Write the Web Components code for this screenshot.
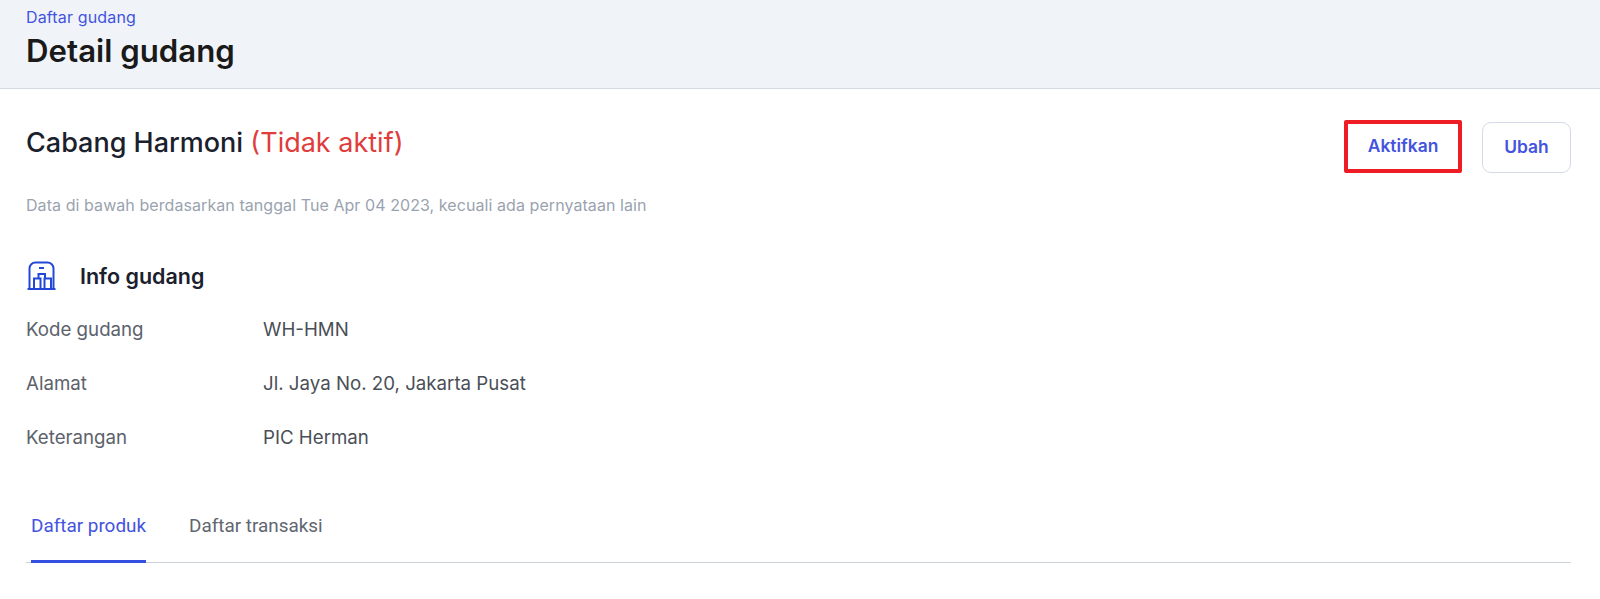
<!DOCTYPE html>
<html lang="id">
<head>
<meta charset="utf-8">
<title>Detail gudang</title>
<style>
	html, body { margin: 0; background: #fff; }
	body { font-family: Inter, "Liberation Sans", sans-serif; overflow: hidden; }
</style>
</head>
<body>
<page-header crumb="Daftar gudang" title="Detail gudang"></page-header>
<main-content>
	<warehouse-title slot="title" name="Cabang Harmoni" status="(Tidak aktif)">
		<action-button marked>Aktifkan</action-button>
		<action-button>Ubah</action-button>
	</warehouse-title>
	<info-section heading="Info gudang">
		<info-row label="Kode gudang">WH-HMN</info-row>
		<info-row label="Alamat">Jl. Jaya No. 20, Jakarta Pusat</info-row>
		<info-row label="Keterangan">PIC Herman</info-row>
	</info-section>
	<tab-bar>
		<tab-item active>Daftar produk</tab-item>
		<tab-item>Daftar transaksi</tab-item>
	</tab-bar>
</main-content>
<script>
class PageHeader extends HTMLElement {
	connectedCallback() {
		const root = this.attachShadow({ mode: 'open' });
		root.innerHTML = `
		<style>
			:host { display: block; height: 89px; box-sizing: border-box; padding: 8px 26px 0; background: #f0f4f9; border-bottom: 1px solid #d5dae2; }
			a { display: block; font-size: 16px; letter-spacing: 0.15px; line-height: 18px; color: #4353e0; text-decoration: none; }
			h1 { margin: 6px 0 0; font-size: 31.2px; line-height: 38px; font-weight: 600; color: #1a1a1a; }
		</style>
		<a href="#">${this.getAttribute('crumb')}</a>
		<h1>${this.getAttribute('title')}</h1>`;
	}
}

class MainContent extends HTMLElement {
	constructor() {
		super();
		this.attachShadow({ mode: 'open' }).innerHTML = `
		<style>
			:host { display: block; padding: 29px 29px 0 26px; }
		</style>
		<slot name="title"></slot>
		<slot></slot>`;
	}
}

class WarehouseTitle extends HTMLElement {
	connectedCallback() {
		const root = this.attachShadow({ mode: 'open' });
		root.innerHTML = `
		<style>
			:host { display: block; }
			.top { display: flex; justify-content: space-between; align-items: flex-start; height: 77px; padding-top: 4px; box-sizing: border-box; }
			h2 { margin: 3px 0 0; font-size: 27px; line-height: 36px; font-weight: 550; color: #1a202c; }
			h2 span { font-weight: 400; color: #e03c3c; }
			.actions { display: flex; gap: 20px; }
			p { margin: 0; font-size: 16px; letter-spacing: 0.07px; line-height: 20px; color: #9aa3af; }
		</style>
		<div class="top">
			<h2>${this.getAttribute('name')} <span>${this.getAttribute('status')}</span></h2>
			<div class="actions"><slot></slot></div>
		</div>
		<p>Data di bawah berdasarkan tanggal Tue Apr 04 2023, kecuali ada pernyataan lain</p>`;
	}
}

class ActionButton extends HTMLElement {
	constructor() {
		super();
		this.attachShadow({ mode: 'open' }).innerHTML = `
		<style>
			:host { display: block; }
			button { display: block; box-sizing: border-box; height: 51px; width: 89px; padding: 0 0 2px; background: #fff; border: 1px solid #d5dae6; border-radius: 9px; font: 600 17.4px Inter, sans-serif; color: #4353e0; }
			:host([marked]) button { width: 118px; height: 53px; margin-top: -2px; border: 4px solid #ee1c25; border-radius: 2px; }
		</style>
		<button type="button"><slot></slot></button>`;
	}
}

class InfoSection extends HTMLElement {
	connectedCallback() {
		const root = this.attachShadow({ mode: 'open' });
		root.innerHTML = `
		<style>
			:host { display: block; margin-top: 43px; }
			header { display: flex; align-items: center; gap: 24px; height: 36px; margin-bottom: 8px; }
			svg { width: 30px; height: 30px; flex: none; margin-top: -1px; }
			h3 { margin: 0; font-size: 21.5px; line-height: 28px; font-weight: 600; color: #1a202c; }
		</style>
		<header>
			<svg viewBox="-0.5 0.5 30 30" fill="none" stroke="#2348d8" stroke-width="2">
				<path d="M3 28V8a6 6 0 0 1 6-6h12a6 6 0 0 1 6 6v20"/>
				<path d="M1 28.500h28"/>
				<path d="M12.500 7.500h5"/>
				<path d="M7.500 28V18H14v10M12 18v-4.500h6.500V18M18 28V18h6.500v10"/>
			</svg>
			<h3>${this.getAttribute('heading')}</h3>
		</header>
		<slot></slot>`;
	}
}

class InfoRow extends HTMLElement {
	connectedCallback() {
		const root = this.attachShadow({ mode: 'open' });
		root.innerHTML = `
		<style>
			:host { display: flex; height: 54px; align-items: center; font-size: 18.7px; color: #4a4f57; }
			span { width: 237px; flex: none; color: #5c626b; }
		</style>
		<span>${this.getAttribute('label')}</span><slot></slot>`;
	}
}

class TabBar extends HTMLElement {
	constructor() {
		super();
		this.attachShadow({ mode: 'open' }).innerHTML = `
		<style>
			:host { display: flex; gap: 13px; margin-top: 37px; padding-left: 5px; border-bottom: 1px solid #cbd2dc; }
		</style>
		<slot></slot>`;
	}
}

class TabItem extends HTMLElement {
	constructor() {
		super();
		this.attachShadow({ mode: 'open' }).innerHTML = `
		<style>
			:host { display: block; box-sizing: border-box; height: 62px; margin-bottom: -1px; padding: 13px 0 0; font: 18.9px/24px Roboto, sans-serif; color: #5f6670; border-bottom: 3px solid transparent; }
			:host([active]) { color: #4353e0; border-bottom-color: #3350e0; }
			:host(:not([active])) { padding-left: 30px; }
		</style>
		<slot></slot>`;
	}
}

customElements.define('page-header', PageHeader);
customElements.define('main-content', MainContent);
customElements.define('warehouse-title', WarehouseTitle);
customElements.define('action-button', ActionButton);
customElements.define('info-section', InfoSection);
customElements.define('info-row', InfoRow);
customElements.define('tab-bar', TabBar);
customElements.define('tab-item', TabItem);
</script>
</body>
</html>
